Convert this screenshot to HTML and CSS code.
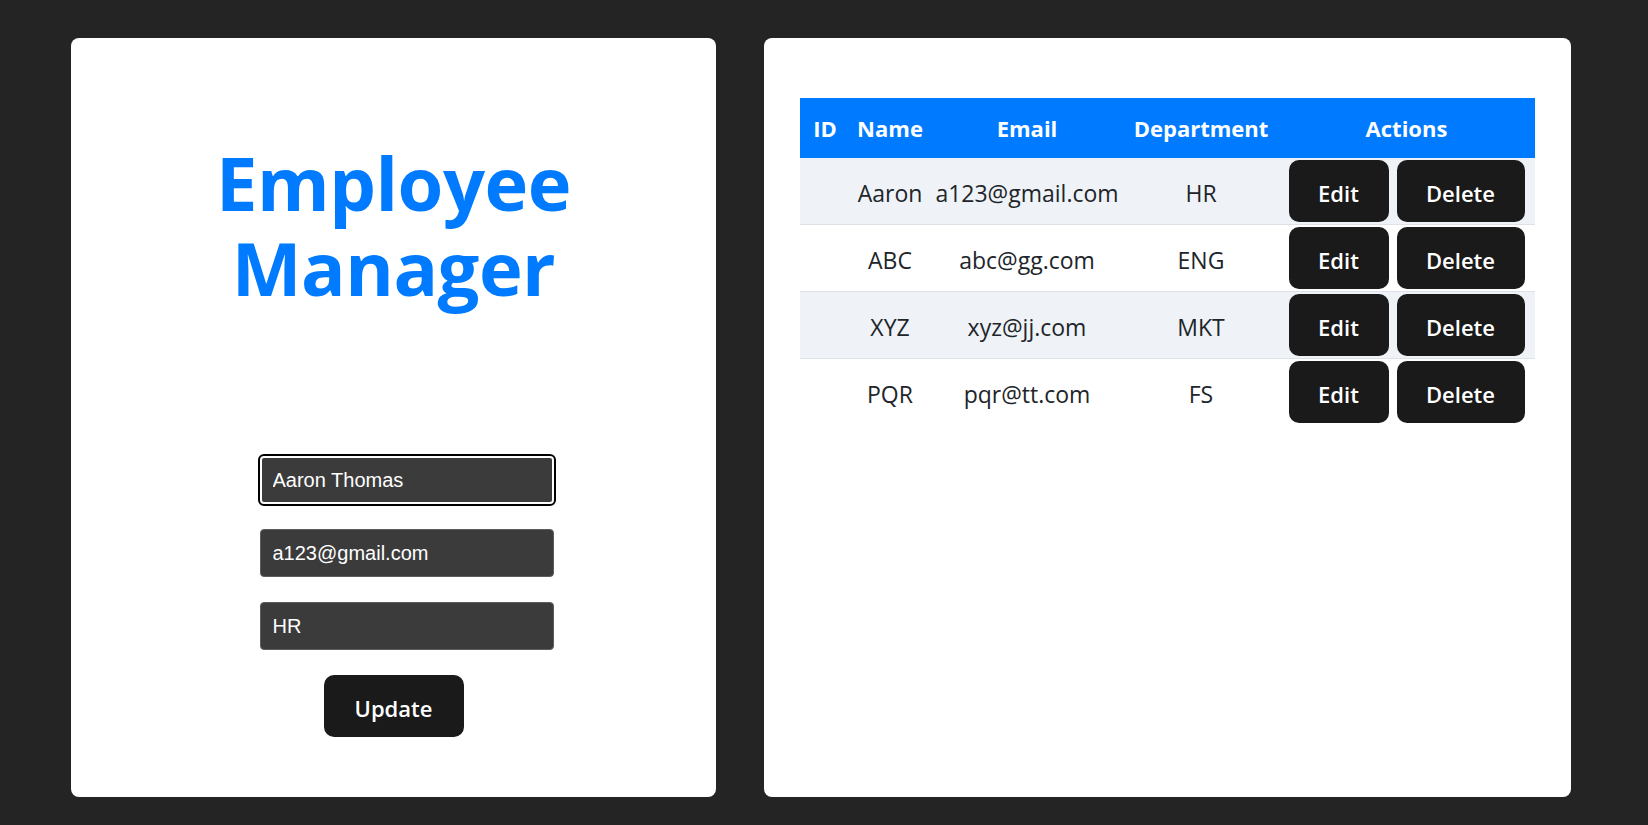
FILE: index.html
```html
<!DOCTYPE html>
<html lang="en">
<head>
<meta charset="utf-8">
<title>Employee Manager</title>
<link rel="stylesheet" href="styles.css">
</head>
<body>
<div class="page">
  <section class="card card-form">
    <h1 class="title">Employee<br>Manager</h1>
    <form class="form">
      <input class="field field-focused" type="text" value="Aaron Thomas">
      <input class="field" type="text" value="a123@gmail.com">
      <input class="field" type="text" value="HR">
      <button type="button" class="btn btn-update">Update</button>
    </form>
  </section>
  <section class="card card-table">
    <table class="emp-table">
      <colgroup>
        <col class="c-id"><col class="c-name"><col class="c-email"><col class="c-dept"><col class="c-act">
      </colgroup>
      <thead>
        <tr><th>ID</th><th>Name</th><th>Email</th><th>Department</th><th>Actions</th></tr>
      </thead>
      <tbody>
        <tr class="odd"><td></td><td>Aaron</td><td>a123@gmail.com</td><td>HR</td><td class="act"><div class="actions"><button class="btn">Edit</button><button class="btn">Delete</button></div></td></tr>
        <tr><td></td><td>ABC</td><td>abc@gg.com</td><td>ENG</td><td class="act"><div class="actions"><button class="btn">Edit</button><button class="btn">Delete</button></div></td></tr>
        <tr class="odd"><td></td><td>XYZ</td><td>xyz@jj.com</td><td>MKT</td><td class="act"><div class="actions"><button class="btn">Edit</button><button class="btn">Delete</button></div></td></tr>
        <tr class="last"><td></td><td>PQR</td><td>pqr@tt.com</td><td>FS</td><td class="act"><div class="actions"><button class="btn">Edit</button><button class="btn">Delete</button></div></td></tr>
      </tbody>
    </table>
  </section>
</div>
</body>
</html>
```
FILE: styles.css
```css
* { box-sizing: border-box; }
html, body { margin: 0; padding: 0; }
body {
  background: #242424;
  font-family: "Open Sans", "Noto Sans", sans-serif;
  width: 1648px;
  height: 825px;
  overflow: hidden;
}
.page {
  display: flex;
  gap: 48px;
  padding: 38px 0 28px 71px;
}
.card {
  background: #ffffff;
  border-radius: 8px;
  height: 759px;
  flex: none;
}
.card-form {
  width: 645px;
  display: flex;
  flex-direction: column;
  align-items: center;
}
.title {
  margin: 102px 0 0;
  color: #007bff;
  font-family: "Open Sans", sans-serif;
  font-weight: 700;
  font-size: 74px;
  line-height: 85px;
  text-align: center;
  letter-spacing: -0.5px;
}
.form {
  margin-top: 146px;
  display: flex;
  flex-direction: column;
  align-items: center;
}
.field {
  width: 294px;
  height: 48px;
  margin: 0 0 25px 26px;
  padding: 0 12px;
  border: 1px solid #5d5d5d;
  border-radius: 4px;
  background: #3b3b3b;
  color: #ffffff;
  font-family: "Liberation Sans", Arial, sans-serif;
  font-size: 20px;
}
.field-focused {
  border: 2px solid #ffffff;
  padding-left: 11px;
  outline: 2px solid #000000;
  outline-offset: 0;
}
.btn {
  display: inline-block;
  height: 62px;
  padding: 4px 30px 0;
  border: 0;
  border-radius: 10px;
  background: #1a1a1a;
  color: #ffffff;
  font-family: "Open Sans", sans-serif;
  font-weight: 600;
  font-size: 22px;
  line-height: 56px;
  cursor: pointer;
}
.btn-update {
  width: 140px;
  padding: 4px 0 0;
}
.card-table {
  width: 807px;
  padding: 60px 36px;
}
.emp-table {
  width: 735px;
  table-layout: fixed;
  border-collapse: collapse;
  font-size: 23px;
  color: #212529;
}
.c-id { width: 50px; }
.c-name { width: 80px; }
.c-email { width: 194px; }
.c-dept { width: 154px; }
.c-act { width: 257px; }
.emp-table th {
  background: #007bff;
  color: #ffffff;
  font-weight: 700;
  font-size: 22px;
  height: 60px;
  padding: 0;
  text-align: center;
  white-space: nowrap;
}
.emp-table td {
  padding: 6px 0 2px;
  text-align: center;
  white-space: nowrap;
  border-bottom: 1px solid #dee2e6;
}
.emp-table td.act {
  padding: 2px 0;
}
.emp-table tr.last td { border-bottom: none; }
.emp-table tr.odd td { background: #eff3f8; }
.actions {
  display: flex;
  justify-content: center;
  gap: 8px;
}
.actions .btn:first-child { width: 100px; padding: 4px 0 0; }
.actions .btn:last-child { width: 128px; padding: 4px 0 0; }
```
